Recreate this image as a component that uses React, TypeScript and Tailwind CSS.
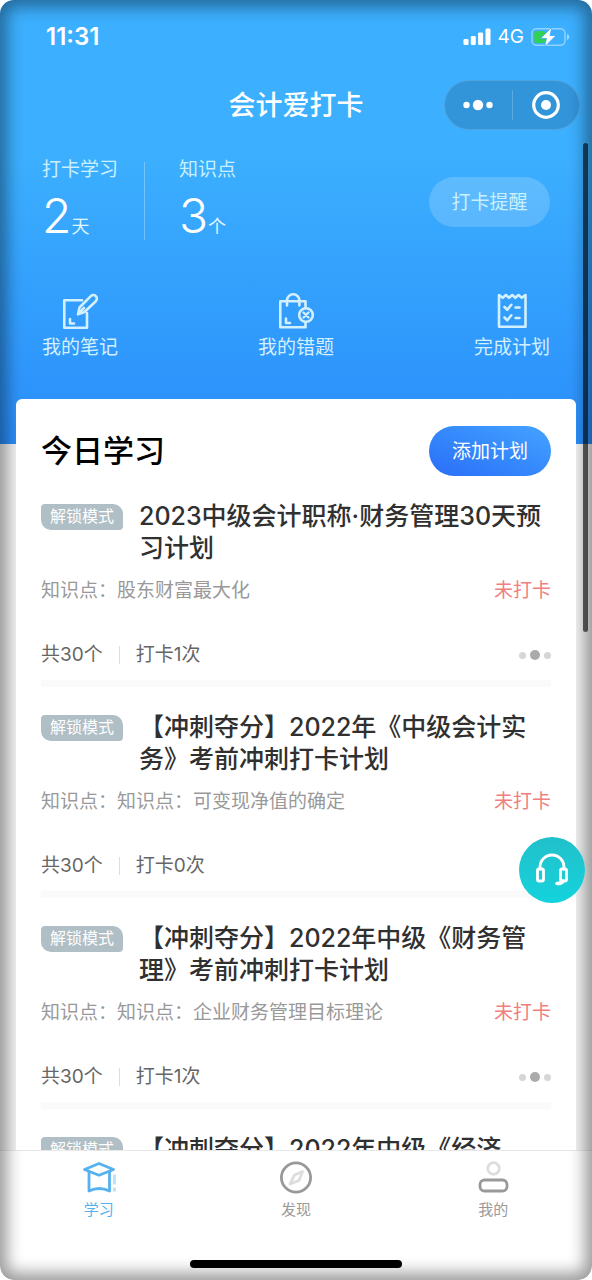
import React from "react";

type Plan = { title: string; point: string; total: number; done: number };

const plans: Plan[] = [
  { title: "2023中级会计职称·财务管理30天预习计划", point: "股东财富最大化", total: 30, done: 1 },
  { title: "【冲刺夺分】2022年《中级会计实务》考前冲刺打卡计划", point: "知识点：可变现净值的确定", total: 30, done: 0 },
  { title: "【冲刺夺分】2022年中级《财务管理》考前冲刺打卡计划", point: "知识点：企业财务管理目标理论", total: 30, done: 1 },
  { title: "【冲刺夺分】2022年中级《经济法》考前冲刺打卡计划", point: "知识点：经济法基础", total: 30, done: 0 },
];

function StatusBar() {
  return (
    <div className="flex h-[74px] items-center justify-between pr-[22px] pl-[46px]">
      <span className="text-2xl leading-8 font-semibold">11:31</span>
      <div className="flex items-center gap-[7px]">
        <svg width="28" height="18" viewBox="0 0 28 18" fill="currentColor" aria-hidden="true">
          <rect x="0.5" y="11" width="5" height="6" rx="1.3" />
          <rect x="7.8" y="8" width="5" height="9" rx="1.3" />
          <rect x="15.1" y="4.5" width="5" height="12.5" rx="1.3" />
          <rect x="22.5" y="0.5" width="5" height="16.5" rx="1.3" />
        </svg>
        <span className="text-[19px] leading-6">4G</span>
        <svg width="39" height="20" viewBox="0 0 39 20" aria-hidden="true">
          <rect x="1" y="1.8" width="33" height="16.4" rx="4.5" fill="none" stroke="#fff" strokeOpacity=".45" strokeWidth="1.4" />
          <path d="M36 7v6c1.4-.4 2.2-1.6 2.2-3S37.4 7.4 36 7z" fill="#fff" fillOpacity=".5" />
          <rect x="3.2" y="4" width="11" height="12" rx="2.5" fill="#31d158" />
          <path d="M21 0 9.5 11.5h6L13.5 20 25 8.5H19z" fill="#fff" stroke="#3ba9fb" strokeWidth=".8" />
        </svg>
      </div>
    </div>
  );
}

function TitleBar() {
  return (
    <div className="grid h-[62px] grid-cols-[1fr_auto_1fr] items-center">
      <h1 className="col-start-2 pt-0.5 text-[27px] leading-9 font-medium">会计爱打卡</h1>
      <div className="mr-3 flex h-[50px] w-[136px] items-center justify-self-end rounded-full border border-white/15 bg-[#3294d9]">
        <button aria-label="更多" className="flex h-full flex-1 items-center justify-center">
          <svg width="30" height="12" viewBox="0 0 30 12" fill="currentColor">
            <circle cx="3.5" cy="6" r="3.2" />
            <circle cx="15" cy="6" r="5.2" />
            <circle cx="26.5" cy="6" r="3.2" />
          </svg>
        </button>
        <span className="h-[30px] w-px bg-white/20" />
        <button aria-label="关闭" className="flex h-full flex-1 items-center justify-center">
          <svg width="28" height="28" viewBox="0 0 28 28" fill="currentColor">
            <circle cx="14" cy="14" r="12.3" fill="none" stroke="currentColor" strokeWidth="3.2" />
            <circle cx="14" cy="14" r="5" />
          </svg>
        </button>
      </div>
    </div>
  );
}

function Stat({ label, value, unit }: { label: string; value: number; unit: string }) {
  return (
    <div>
      <div className="text-[19px] leading-6 text-[#c9f0ff]">{label}</div>
      <div className="mt-[7px] flex items-baseline">
        <span className="text-[48px] leading-[53px] font-light">{value}</span>
        <span className="text-[18px] text-[#e0f6ff]">{unit}</span>
      </div>
    </div>
  );
}

function NotesIcon() {
  return (
    <svg width="38" height="38" viewBox="0 0 38 38" fill="none" stroke="currentColor" strokeWidth="2.6" strokeLinejoin="round" strokeLinecap="round">
      <path d="M21 8.300H3.300v27.400H26V21" />
      <path d="M9 27v4.500h4" />
      <path d="M17 22.300 18.500 15.500 29.800 4.200a3.500 3.500 0 0 1 5 5L23.500 20z" />
      <path d="m18.500 20.500 4.500-4.500" />
    </svg>
  );
}

function MistakesIcon() {
  return (
    <svg width="38" height="38" viewBox="0 0 38 38" fill="none" stroke="currentColor" strokeWidth="2.6" strokeLinejoin="round" strokeLinecap="round">
      <path d="M28.500 15.500V9.300H3.300v25.900h25.200v-4.500" />
      <path d="M10 13.500V8.500a6.200 6.200 0 0 1 12.400 0v5" />
      <path d="M9 26.500V31h4" />
      <circle cx="29" cy="23" r="6.8" />
      <path d="m26.500 20.500 5 5M31.500 20.500l-5 5" strokeWidth="2.4" />
    </svg>
  );
}

function DoneIcon() {
  return (
    <svg width="38" height="38" viewBox="0 0 38 38" fill="none" stroke="currentColor" strokeWidth="2.6" strokeLinejoin="round" strokeLinecap="round">
      <path d="M6 3v31.800h26.500V3l-3.800 2.800L25.500 3l-3.200 2.800L19.200 3 16 5.800 12.900 3 9.700 5.800z" />
      <path d="m11.500 15 2.800 2.800 4-5M11.500 25.500l2.800 2.800 4-5M22.500 15.500h4M22.500 26h4" />
    </svg>
  );
}

function Shortcut({ label, children }: { label: string; children: React.ReactNode }) {
  return (
    <a href="#" className="flex flex-col items-center gap-0.5 text-[#d3f0ff]">
      {children}
      <span className="text-[19px] leading-8">{label}</span>
    </a>
  );
}

function PlanItem({ plan }: { plan: Plan }) {
  return (
    <li className="mb-6 border-b-[7px] border-[#fafafa] pb-[11px]">
      <div className="flex items-start gap-4">
        <span className="mt-1 h-[26px] w-[82px] shrink-0 rounded-tl-[4px] rounded-tr-[10px] rounded-br-[4px] rounded-bl-[10px] bg-[#b0bec5] text-center text-[16px] leading-[25px] text-white">
          解锁模式
        </span>
        <h3 className="pr-1 text-[25px] leading-8 font-medium text-[#303030] [text-spacing-trim:space-all]">{plan.title}</h3>
      </div>
      <div className="mt-[13px] flex items-center justify-between text-[19px] leading-7">
        <span className="text-[#999]">知识点：{plan.point}</span>
        <span className="text-[#f08080]">未打卡</span>
      </div>
      <div className="mt-9 flex items-center text-[19px] leading-7 text-[#666]">
        <span>共{plan.total}个</span>
        <span className="mx-4 h-[18px] w-px bg-[#ddd]" />
        <span>打卡{plan.done}次</span>
        <button aria-label="更多操作" className="ml-auto flex items-center gap-1">
          <span className="size-[7px] rounded-full bg-[#d6d6d6]" />
          <span className="size-[10px] rounded-full bg-[#aaa]" />
          <span className="size-[7px] rounded-full bg-[#d6d6d6]" />
        </button>
      </div>
    </li>
  );
}

function TabBar() {
  return (
    <nav className="border-t border-[#e8e8e8] bg-white pb-3">
      <div className="grid grid-cols-3 pt-[10px] text-[15px] leading-6 text-[#999]">
        <a href="#" className="flex flex-col items-center gap-[3px] text-[#56b2ef]">
          <svg width="34" height="34" viewBox="0 0 34 34" fill="none" stroke="currentColor" strokeWidth="2.8" strokeLinejoin="round">
            <path d="M17 2.500 2.500 8.500 17 14.300 31.500 8.500z" />
            <path d="M7 11v19q10-5 20.500 0V11" />
            <path d="M32.500 13.500v10M32.500 26.500v4" strokeOpacity=".4" />
          </svg>
          学习
        </a>
        <a href="#" className="flex flex-col items-center gap-[3px]">
          <svg width="34" height="34" viewBox="0 0 34 34" fill="none" stroke="#999" strokeWidth="2.8">
            <circle cx="17" cy="16.5" r="14.6" />
            <path d="M23.500 10.500 20 19.500l-9 3.500 4.500-9z" stroke="#ddd" strokeLinejoin="round" />
          </svg>
          发现
        </a>
        <a href="#" className="flex flex-col items-center gap-[3px]">
          <svg width="34" height="34" viewBox="0 0 34 34" fill="none" stroke="#999" strokeWidth="2.8">
            <circle cx="17.5" cy="7.5" r="5.8" stroke="#ddd" />
            <rect x="4" y="19" width="27" height="11" rx="4.5" />
          </svg>
          我的
        </a>
      </div>
      <div className="mx-auto mt-[38px] h-2 w-[212px] rounded-full bg-black" />
    </nav>
  );
}

export default function App() {
  return (
    <div className="relative flex h-screen flex-col overflow-hidden rounded-[14px] bg-white font-['Inter','Noto_Sans_CJK_SC',sans-serif]">
      <main className="min-h-0 flex-1 overflow-hidden bg-[#f4f4f4]">
        <header className="h-[444px] bg-linear-to-b from-[#3caffe] from-35% to-[#2b8efb] text-white">
          <StatusBar />
          <TitleBar />
          <section className="flex items-start px-[42px] pt-[22px]">
            <Stat label="打卡学习" value={2} unit="天" />
            <span className="mx-[26px] mt-1 h-[78px] w-px bg-white/30" />
            <div className="ml-2">
              <Stat label="知识点" value={3} unit="个" />
            </div>
            <button className="mt-[19px] ml-auto h-[50px] w-[121px] rounded-full bg-white/18 pt-0.5 text-[19px] text-[#c9f0ff]">打卡提醒</button>
          </section>
          <section className="flex justify-between px-[42px] pt-[50px]">
            <Shortcut label="我的笔记"><NotesIcon /></Shortcut>
            <Shortcut label="我的错题"><MistakesIcon /></Shortcut>
            <Shortcut label="完成计划"><DoneIcon /></Shortcut>
          </section>
        </header>
        <section className="relative z-20 mx-4 -mt-[45px] rounded-t-md bg-white px-[25px] pt-[27px]">
          <div className="mb-6 flex items-center justify-between">
            <h2 className="text-[31px] leading-[50px] font-medium text-black">今日学习</h2>
            <button className="h-[50px] w-[122px] rounded-full bg-linear-to-tr from-[#2b6df8] to-[#45a3ff] pt-0.5 text-[19px] text-white">添加计划</button>
          </div>
          <ul>
            {plans.map((plan) => <PlanItem key={plan.title} plan={plan} />)}
          </ul>
        </section>
      </main>
      <TabBar />
      <button aria-label="在线客服" className="absolute top-[837px] right-[7px] z-30 flex size-[66px] items-center justify-center rounded-full bg-linear-to-b from-[#21c0cb] to-[#13d3dc] text-white">
        <svg width="34" height="34" viewBox="0 0 34 34" fill="none" stroke="currentColor" strokeWidth="2.8" strokeLinecap="round" strokeLinejoin="round">
          <path d="M5 16v-2a12 12 0 0 1 24 0v2" />
          <rect x="2.5" y="16" width="6" height="12" rx="1.5" />
          <rect x="25.5" y="16" width="6" height="12" rx="1.5" />
          <path d="M28 28q-1 2.500-6 2.500" strokeWidth="3.6" />
        </svg>
      </button>
      <div className="pointer-events-none absolute inset-0 z-10 rounded-[14px] shadow-[inset_0_0_16px_7px_rgba(0,0,0,0.4)]" />
      <div className="pointer-events-none absolute top-[143px] right-1 z-30 h-[489px] w-[5px] rounded-full bg-black/60" />
    </div>
  );
}
